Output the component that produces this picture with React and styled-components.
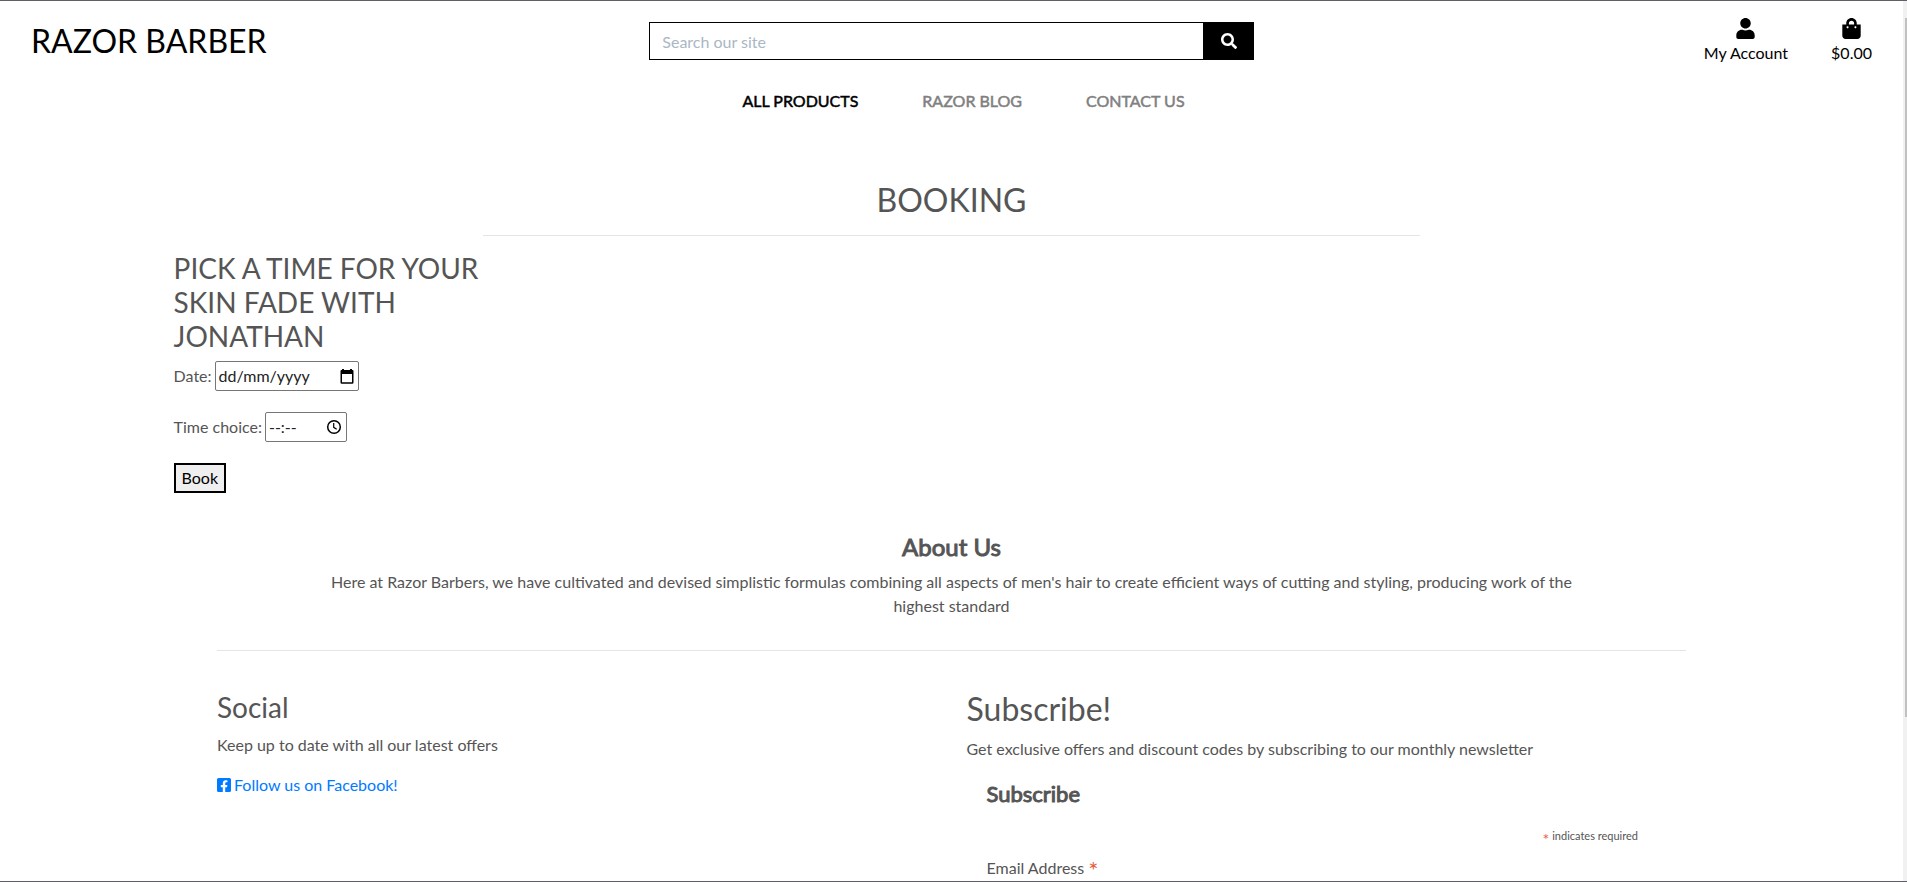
import React from "react";
import styled, { createGlobalStyle } from "styled-components";
import { FaUser, FaShoppingBag, FaSearch, FaFacebookSquare } from "react-icons/fa";

const GlobalStyle = createGlobalStyle`
  *, *::before, *::after { box-sizing: border-box; }
  body {
    margin: 0;
    background: #fff;
    color: #555;
    font-family: Lato, "Open Sans", sans-serif;
    font-size: 16px;
    line-height: 24px;
  }
  h1, h2, h3, p { margin: 0; font-weight: 400; }
  input, button { font: inherit; }
  a { text-decoration: none; }
`;

const Shell = styled.div`
  display: flex;
  height: 100vh;
  border-top: 1px solid #5f5f66;
  border-bottom: 1px solid #5f5f66;
`;

const Page = styled.div`
  flex: 1;
  min-width: 0;
  overflow-y: auto;
  scrollbar-width: none;
`;

const ScrollTrack = styled.div`
  width: 4px;
  padding: 17px 0 0 2px;
  background: #f1f1f1;
`;

const ScrollThumb = styled.div`
  height: 81%;
  background: #c1c1c1;
`;

const Header = styled.header`
  display: grid;
  grid-template-columns: repeat(3, 1fr);
  align-items: start;
  padding-top: 13px;
`;

const Logo = styled.a`
  padding: 8px 0 0 31px;
  color: #000;
  font-size: 32px;
  line-height: 38px;
`;

const SearchForm = styled.form`
  display: flex;
  height: 38px;
  margin: 8px 15px 0;
`;

const SearchInput = styled.input`
  flex: 1;
  min-width: 0;
  padding: 7px 12px 5px;
  border: 1px solid #000;
  border-radius: 0;
  color: #000;
  &::placeholder { color: #aab7c4; opacity: 1; }
`;

const SearchButton = styled.button`
  display: flex;
  align-items: center;
  justify-content: center;
  width: 50px;
  border: 0;
  padding: 0;
  background: #000;
  color: #fff;
`;

const UserLinks = styled.div`
  display: flex;
  justify-content: flex-end;
  gap: 43px;
  padding: 4px 31px 0 0;
`;

const UserLink = styled.a`
  display: flex;
  flex-direction: column;
  align-items: center;
  gap: 2px;
  color: #000;
`;

const Nav = styled.nav`
  display: flex;
  justify-content: center;
  gap: 64px;
  margin-top: 24px;
  padding-left: 24px;
`;

const NavLink = styled.a`
  color: ${(p) => (p.$active ? "#000" : "#808080")};
  -webkit-text-stroke: 0.5px currentColor;
`;

const PageTitle = styled.h2`
  margin-top: 68px;
  font-size: 32px;
  line-height: 38px;
  text-align: center;
`;

const Rule = styled.hr`
  width: ${(p) => p.$width};
  height: 1px;
  margin: 16px auto 15px;
  border: 0;
  background: #e5e5e5;
`;

const Booking = styled.form`
  display: flex;
  flex-direction: column;
  align-items: flex-start;
  margin-left: calc(100% / 12 + 15px);
`;

const BookingTitle = styled.h3`
  max-width: 320px;
  margin-bottom: 8px;
  font-size: 28px;
  line-height: 34px;
  text-transform: uppercase;
`;

const FieldRow = styled.div`
  display: flex;
  align-items: center;
  gap: 3px;
  margin-bottom: 21px;
`;

const PickerBox = styled.span`
  display: flex;
  align-items: center;
  width: ${(p) => p.$width};
  height: 30px;
  padding: 0 4px 0 3px;
  border: 1px solid #767676;
  border-radius: 2px;
  color: #000;
`;

const PickerInput = styled.input`
  flex: 1;
  min-width: 0;
  padding: 0;
  border: 0;
  outline: 0;
  &::placeholder { color: #222; opacity: 1; }
`;

const BookButton = styled.button`
  height: 30px;
  padding: 0 6px;
  border: 2px solid #000;
  background: #efefef;
  color: #000;
  line-height: 24px;
`;

const About = styled.section`
  max-width: 1250px;
  margin: 39px auto 0;
  text-align: center;
`;

const BoldTitle = styled.h2`
  font-size: ${(p) => (p.$small ? "22px" : "24px")};
  line-height: 29px;
  -webkit-text-stroke: 1px currentColor;
`;

const AboutText = styled.p`
  margin-top: 9px;
`;

const Footer = styled.footer`
  max-width: 1469px;
  margin: 32px auto 0;
`;

const Columns = styled.div`
  display: grid;
  grid-template-columns: repeat(2, 1fr);
  gap: 30px;
  padding-top: 24px;
`;

const ColumnTitle = styled.h2`
  margin-bottom: 9px;
  font-size: ${(p) => (p.$large ? "32px" : "28px")};
  line-height: ${(p) => (p.$large ? "38px" : "34px")};
`;

const FacebookLink = styled.a`
  display: inline-flex;
  align-items: center;
  gap: 3px;
  margin-top: 16px;
  color: #007bff;
`;

const FacebookIcon = styled(FaFacebookSquare)`
  width: 14px;
  height: 16px;
`;

const Signup = styled.form`
  padding: 18px 48px 24px 20px;
`;

const Required = styled.p`
  margin-top: 16px;
  font-size: 11px;
  text-align: right;
`;

const Star = styled.span`
  color: #e85c41;
  font-size: ${(p) => (p.$large ? "24px" : "16px")};
  line-height: 0;
  vertical-align: -5px;
`;

const EmailLabel = styled.label`
  display: block;
  margin-top: 8px;
`;

const EmailInput = styled.input`
  width: 100%;
  height: 38px;
  margin-top: 8px;
  padding: 6px 12px;
  border: 1px solid #abb0b2;
  border-radius: 3px;
`;

const CalendarIcon = () => (
  <svg width="14" height="15" viewBox="0 0 14 15" aria-hidden="true">
    <path
      fill="currentColor"
      fillRule="evenodd"
      d="M2 0h2v1h6V0h2v1h.5A1 1 0 0 1 13.500 2v11.500a1.200 1.200 0 0 1-1.200 1.200H1.700A1.200 1.200 0 0 1 .5 13.500V2a1 1 0 0 1 1-1H2zM2 5v8.200h10V5z"
    />
  </svg>
);

const ClockIcon = () => (
  <svg width="16" height="16" viewBox="0 0 16 16" fill="none" stroke="currentColor" strokeWidth="1.500" aria-hidden="true">
    <circle cx="8" cy="8" r="6.300" />
    <path d="M7.700 4v4.300l3 1.900" strokeWidth="1.200" />
  </svg>
);

export default function App() {
  return (
    <>
      <GlobalStyle />
      <Shell>
        <Page>
          <Header>
            <Logo href="#">RAZOR BARBER</Logo>
            <SearchForm role="search">
              <SearchInput type="text" placeholder="Search our site" aria-label="Search our site" />
              <SearchButton type="button" aria-label="Search">
                <FaSearch size={16} />
              </SearchButton>
            </SearchForm>
            <UserLinks>
              <UserLink href="#">
                <FaUser size={21} />
                My Account
              </UserLink>
              <UserLink href="#">
                <FaShoppingBag size={21} />
                $0.00
              </UserLink>
            </UserLinks>
          </Header>
          <Nav>
            <NavLink href="#" $active>ALL PRODUCTS</NavLink>
            <NavLink href="#">RAZOR BLOG</NavLink>
            <NavLink href="#">CONTACT US</NavLink>
          </Nav>

          <main>
            <PageTitle>BOOKING</PageTitle>
            <Rule $width="calc(50% - 15px)" />
            <Booking>
              <BookingTitle>Pick a time for your skin fade with Jonathan</BookingTitle>
              <FieldRow>
                <label htmlFor="date">Date:</label>
                <PickerBox $width="144px">
                  <PickerInput id="date" type="text" placeholder="dd/mm/yyyy" />
                  <CalendarIcon />
                </PickerBox>
              </FieldRow>
              <FieldRow>
                <label htmlFor="time">Time choice:</label>
                <PickerBox $width="82px">
                  <PickerInput id="time" type="text" placeholder="--:--" />
                  <ClockIcon />
                </PickerBox>
              </FieldRow>
              <BookButton type="button">Book</BookButton>
            </Booking>
            <About>
              <BoldTitle>About Us</BoldTitle>
              <AboutText>
                Here at Razor Barbers, we have cultivated and devised simplistic formulas combining all aspects of
                men's hair to create efficient ways of cutting and styling, producing work of the highest standard
              </AboutText>
            </About>
          </main>

          <Footer>
            <Rule $width="100%" />
            <Columns>
              <section>
                <ColumnTitle>Social</ColumnTitle>
                <p>Keep up to date with all our latest offers</p>
                <FacebookLink href="#">
                  <FacebookIcon />
                  Follow us on Facebook!
                </FacebookLink>
              </section>
              <section>
                <ColumnTitle $large>Subscribe!</ColumnTitle>
                <p>Get exclusive offers and discount codes by subscribing to our monthly newsletter</p>
                <Signup>
                  <BoldTitle $small>Subscribe</BoldTitle>
                  <Required>
                    <Star>*</Star> indicates required
                  </Required>
                  <EmailLabel htmlFor="email">
                    Email Address <Star $large>*</Star>
                  </EmailLabel>
                  <EmailInput id="email" type="email" />
                </Signup>
              </section>
            </Columns>
          </Footer>
        </Page>
        <ScrollTrack>
          <ScrollThumb />
        </ScrollTrack>
      </Shell>
    </>
  );
}
